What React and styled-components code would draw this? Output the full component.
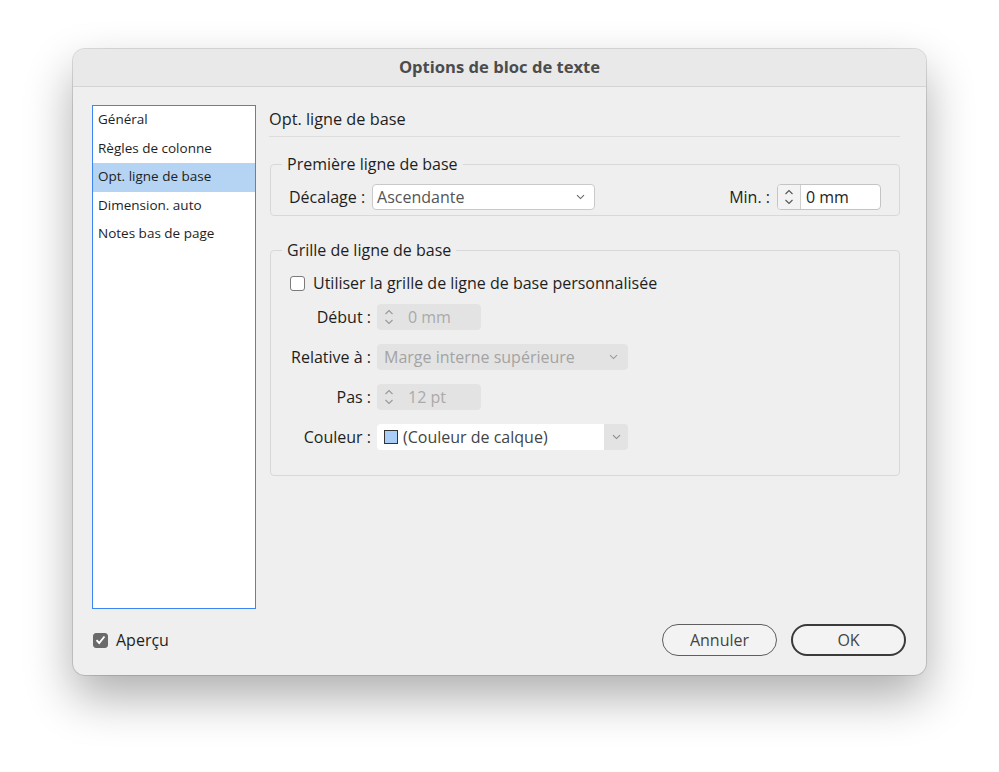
import React from "react";
import styled, { createGlobalStyle } from "styled-components";

const GlobalStyle = createGlobalStyle`
  body {
    margin: 0;
    background: #ffffff;
    font-family: "Open Sans", "Noto Sans", sans-serif;
    color: #222;
  }
`;

const Page = styled.div`
  width: 999px;
  height: 772px;
  box-sizing: border-box;
  padding: 49px 0 0 73px;
  background: #fff;
`;

const Window = styled.div`
  width: 853px;
  height: 626px;
  display: flex;
  flex-direction: column;
  background: #efefef;
  border-radius: 12px;
  overflow: hidden;
  box-shadow: 0 22px 48px rgba(0, 0, 0, 0.32), 0 0 0 1px rgba(0, 0, 0, 0.13);
`;

const TitleBar = styled.div`
  height: 38px;
  flex-shrink: 0;
  display: flex;
  align-items: center;
  justify-content: center;
  padding-bottom: 3px;
  box-sizing: border-box;
  background: #e9e9e9;
  border-bottom: 1px solid #d5d5d5;
  font-size: 16.6px;
  font-weight: 700;
  color: #4c4c4c;
`;

const Body = styled.div`
  flex: 1;
  display: flex;
  flex-direction: column;
  padding: 18px 20px 19px 19px;
`;

const Content = styled.div`
  height: 504px;
  display: flex;
  gap: 13px;
`;

const Sidebar = styled.ul`
  width: 164px;
  margin: 0;
  padding: 0;
  list-style: none;
  box-sizing: border-box;
  background: #fff;
  border: 1px solid #3b86f3;
`;

const SidebarItem = styled.li`
  height: 28.5px;
  box-sizing: border-box;
  display: flex;
  align-items: center;
  padding: 0 0 2px 5px;
  font-size: 13.5px;
  color: #1e1e1e;
  background: ${(p) => (p.$active ? "#b5d4f3" : "transparent")};
`;

const Main = styled.div`
  width: 631px;
  display: flex;
  flex-direction: column;
`;

const PanelHeader = styled.div`
  height: 28px;
  line-height: 28px;
  padding-bottom: 3px;
  border-bottom: 1px solid #dcdcdc;
  font-size: 16.3px;
  color: #1e1e1e;
`;

const Group = styled.fieldset`
  margin: ${(p) => p.$top}px 0 0 1px;
  padding: ${(p) => p.$pt}px 18px ${(p) => p.$pb}px 18px;
  min-width: 0;
  border: 1px solid #d8d8d8;
  border-radius: 4px;
`;

const Legend = styled.legend`
  margin-left: -7px;
  padding: 0 5px;
  line-height: 18px;
  font-size: 16px;
  color: #1e1e1e;
`;

const SplitRow = styled.div`
  display: flex;
  justify-content: space-between;
  align-items: center;
`;

const Field = styled.div`
  display: flex;
  align-items: center;
  gap: 7px;
`;

const Label = styled.span`
  font-size: 16px;
  color: #1e1e1e;
  white-space: nowrap;
`;

const Select = styled.div`
  width: ${(p) => p.$width}px;
  height: 26px;
  box-sizing: border-box;
  display: flex;
  align-items: center;
  justify-content: space-between;
  padding: 0 9px 0 ${(p) => (p.$disabled ? 6 : 4)}px;
  border-radius: 4px;
  border: 1px solid ${(p) => (p.$disabled ? "#e3e3e3" : "#c9c9c9")};
  background: ${(p) => (p.$disabled ? "#e3e3e3" : "#fff")};
  font-size: 16px;
  color: ${(p) => (p.$disabled ? "#a3a3a3" : "#555")};
`;

const Spinner = styled.div`
  width: 104px;
  height: 26px;
  box-sizing: border-box;
  display: flex;
  border-radius: 4px;
  overflow: hidden;
  border: 1px solid ${(p) => (p.$disabled ? "#e3e3e3" : "#c4c4c4")};
  background: ${(p) => (p.$disabled ? "#e3e3e3" : "#fff")};
  font-size: 16px;
  color: ${(p) => (p.$disabled ? "#aaaaaa" : "#1e1e1e")};
`;

const SpinButtons = styled.div`
  width: 22px;
  display: flex;
  align-items: center;
  justify-content: center;
  background: ${(p) => (p.$disabled ? "#e3e3e3" : "#f3f3f3")};
  border-right: 1px solid ${(p) => (p.$disabled ? "#e3e3e3" : "#cfcfcf")};
`;

const SpinValue = styled.div`
  flex: 1;
  display: flex;
  align-items: center;
  padding-left: ${(p) => (p.$disabled ? 7 : 5)}px;
`;

const CheckRow = styled.label`
  height: 20px;
  display: flex;
  align-items: center;
  gap: ${(p) => p.$gap}px;
  margin-left: 1px;
  font-size: 16px;
  color: #1e1e1e;
`;

const CheckBox = styled.span`
  width: 15px;
  height: 15px;
  box-sizing: border-box;
  display: flex;
  align-items: center;
  justify-content: center;
  border-radius: 3px;
  border: 1px solid ${(p) => (p.$checked ? "#6a6a6a" : "#7b7b7b")};
  background: ${(p) => (p.$checked ? "#6a6a6a" : "#fff")};
`;

const FormGrid = styled.div`
  display: grid;
  grid-template-columns: 82px auto;
  column-gap: 6px;
  row-gap: 14px;
  justify-content: start;
  align-items: center;
  margin-top: 11px;
  & > ${Label} {
    text-align: right;
  }
`;

const ColorSelect = styled.div`
  width: 251px;
  height: 26px;
  display: flex;
  border-radius: 4px;
  overflow: hidden;
  font-size: 16px;
  color: #444;
`;

const ColorMain = styled.div`
  flex: 1;
  display: flex;
  align-items: center;
  gap: 5px;
  padding-left: 7px;
  background: #fff;
`;

const Swatch = styled.span`
  width: 14px;
  height: 14px;
  box-sizing: border-box;
  border: 1px solid #333;
  background: #a9cdf7;
`;

const ColorArrow = styled.div`
  width: 24px;
  display: flex;
  align-items: center;
  justify-content: center;
  background: #e3e3e3;
`;

const Footer = styled.div`
  margin-top: 15px;
  height: 32px;
  display: flex;
  align-items: center;
  justify-content: space-between;
`;

const Buttons = styled.div`
  display: flex;
  gap: 14px;
`;

const Button = styled.button`
  width: 115px;
  height: 32px;
  box-sizing: border-box;
  border-radius: 16px;
  background: #f3f3f3;
  border: ${(p) => (p.$primary ? "2px solid #3a3a3a" : "1px solid #5e5e5e")};
  font-family: inherit;
  font-size: 16px;
  color: #444;
`;

const Chevron = ({ color = "#777" }) => (
  <svg width="9" height="6" viewBox="0 0 9 6">
    <path d="M1 1.2 L4.5 4.6 L8 1.2" fill="none" stroke={color} strokeWidth="1.1" />
  </svg>
);

const SpinArrows = ({ color = "#555" }) => (
  <svg width="10" height="18" viewBox="0 0 10 18">
    <path d="M1.5 6 L5 2.5 L8.5 6" fill="none" stroke={color} strokeWidth="1.1" />
    <path d="M1.5 12 L5 15.5 L8.5 12" fill="none" stroke={color} strokeWidth="1.1" />
  </svg>
);

const Check = () => (
  <svg width="11" height="10" viewBox="0 0 11 10">
    <path d="M1.5 5.2 L4.2 8 L9.5 1.5" fill="none" stroke="#fff" strokeWidth="1.9" />
  </svg>
);

const sections = [
  "Général",
  "Règles de colonne",
  "Opt. ligne de base",
  "Dimension. auto",
  "Notes bas de page",
];

const App = () => {
  return (
    <Page>
      <GlobalStyle />
      <Window>
        <TitleBar>Options de bloc de texte</TitleBar>
        <Body>
          <Content>
            <Sidebar>
              {sections.map((s) => (
                <SidebarItem key={s} $active={s === "Opt. ligne de base"}>
                  {s}
                </SidebarItem>
              ))}
            </Sidebar>
            <Main>
              <PanelHeader>Opt. ligne de base</PanelHeader>

              <Group $top={18} $pt={11} $pb={5}>
                <Legend>Première ligne de base</Legend>
                <SplitRow>
                  <Field>
                    <Label>Décalage :</Label>
                    <Select $width={223}>
                      <span>Ascendante</span>
                      <Chevron color="#666" />
                    </Select>
                  </Field>
                  <Field>
                    <Label>Min. :</Label>
                    <Spinner>
                      <SpinButtons>
                        <SpinArrows />
                      </SpinButtons>
                      <SpinValue>0 mm</SpinValue>
                    </Spinner>
                  </Field>
                </SplitRow>
              </Group>

              <Group $top={25} $pt={14} $pb={25}>
                <Legend>Grille de ligne de base</Legend>
                <CheckRow $gap={8}>
                  <CheckBox />
                  Utiliser la grille de ligne de base personnalisée
                </CheckRow>
                <FormGrid>
                  <Label>Début :</Label>
                  <Spinner $disabled>
                    <SpinButtons $disabled>
                      <SpinArrows color="#999" />
                    </SpinButtons>
                    <SpinValue $disabled>0 mm</SpinValue>
                  </Spinner>

                  <Label>Relative à :</Label>
                  <Select $width={251} $disabled>
                    <span>Marge interne supérieure</span>
                    <Chevron color="#999" />
                  </Select>

                  <Label>Pas :</Label>
                  <Spinner $disabled>
                    <SpinButtons $disabled>
                      <SpinArrows color="#999" />
                    </SpinButtons>
                    <SpinValue $disabled>12 pt</SpinValue>
                  </Spinner>

                  <Label>Couleur :</Label>
                  <ColorSelect>
                    <ColorMain>
                      <Swatch />
                      (Couleur de calque)
                    </ColorMain>
                    <ColorArrow>
                      <Chevron color="#888" />
                    </ColorArrow>
                  </ColorSelect>
                </FormGrid>
              </Group>
            </Main>
          </Content>
          <Footer>
            <CheckRow $gap={8}>
              <CheckBox $checked>
                <Check />
              </CheckBox>
              Aperçu
            </CheckRow>
            <Buttons>
              <Button>Annuler</Button>
              <Button $primary>OK</Button>
            </Buttons>
          </Footer>
        </Body>
      </Window>
    </Page>
  );
};

export default App;
